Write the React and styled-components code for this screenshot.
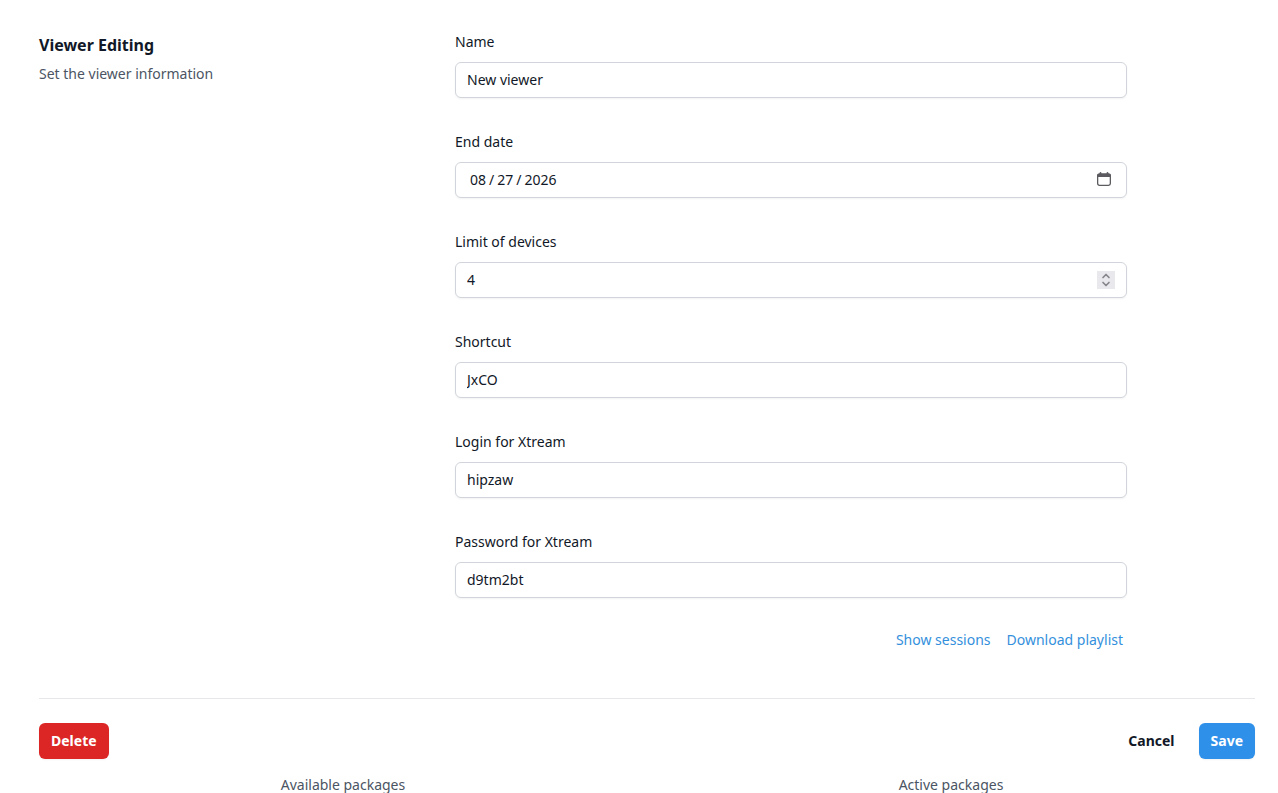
import React, { useState } from 'react';
import styled, { createGlobalStyle } from 'styled-components';

const GlobalStyle = createGlobalStyle`
  *, *::before, *::after {
    box-sizing: border-box;
  }

  body {
    margin: 0;
    background: #ffffff;
    color: #111827;
    font-family: 'Noto Sans', sans-serif;
    font-size: 14px;
    line-height: 24px;
  }
`;

const fields = [
  { id: 'name', label: 'Name', type: 'text' },
  { id: 'endDate', label: 'End date', type: 'date' },
  { id: 'devices', label: 'Limit of devices', type: 'number' },
  { id: 'shortcut', label: 'Shortcut', type: 'text' },
  { id: 'login', label: 'Login for Xtream', type: 'text' },
  { id: 'password', label: 'Password for Xtream', type: 'text' },
];

const CalendarIcon = () => (
  <svg width="14" height="14" viewBox="0 0 14 14" fill="none" aria-hidden="true">
    <rect x="0.65" y="2.15" width="12.7" height="11.2" rx="1.8" stroke="#5b5b60" strokeWidth="1.3" />
    <path d="M2 1.5h10a2 2 0 0 1 2 2V5H0V3.5a2 2 0 0 1 2-2z" fill="#5b5b60" />
    <path d="M3.5 0.9v1.5M10.5 0.9v1.5" stroke="#5b5b60" strokeWidth="1.8" strokeLinecap="round" />
  </svg>
);

const ChevronIcon = ({ d }) => (
  <svg width="18" height="9" viewBox="0 0 18 9" fill="none" aria-hidden="true">
    <path d={d} stroke="#85858c" strokeWidth="1.7" strokeLinecap="round" strokeLinejoin="round" />
  </svg>
);

const App = () => {
  const [viewer, setViewer] = useState({
    name: 'New viewer',
    endDate: '2026-08-27',
    devices: '4',
    shortcut: 'JxCO',
    login: 'hipzaw',
    password: 'd9tm2bt',
  });

  const handleChange = (e) => {
    setViewer({ ...viewer, [e.target.name]: e.target.value });
  };

  const changeDevices = (step) => {
    setViewer({ ...viewer, devices: String(Number(viewer.devices) + step) });
  };

  return (
    <>
      <GlobalStyle />
      <Page>
        <form onSubmit={(e) => e.preventDefault()}>
          <Section>
            <div>
              <Title>Viewer Editing</Title>
              <Description>Set the viewer information</Description>
            </div>
            <Fields>
              {fields.map(({ id, label, type }) => (
                <Field key={id}>
                  <Label htmlFor={id}>{label}</Label>
                  <Control>
                    <Input id={id} name={id} type={type} value={viewer[id]} onChange={handleChange} />
                    {type === 'date' && (
                      <PickerButton
                        type="button"
                        aria-label="Choose date"
                        onClick={() => document.getElementById(id).showPicker()}
                      >
                        <CalendarIcon />
                      </PickerButton>
                    )}
                    {type === 'number' && (
                      <Spinner>
                        <SpinButton type="button" aria-label="More devices" onClick={() => changeDevices(1)}>
                          <ChevronIcon d="M6 6.5 9 3.5l3 3" />
                        </SpinButton>
                        <SpinButton type="button" aria-label="Fewer devices" onClick={() => changeDevices(-1)}>
                          <ChevronIcon d="M6 2.5l3 3 3-3" />
                        </SpinButton>
                      </Spinner>
                    )}
                  </Control>
                </Field>
              ))}
              <Links>
                <Link href="#sessions">Show sessions</Link>
                <Link href="#playlist">Download playlist</Link>
              </Links>
            </Fields>
          </Section>

          <Actions>
            <Button type="button" $color="#dc2626">Delete</Button>
            <ActionGroup>
              <CancelButton type="button">Cancel</CancelButton>
              <Button type="submit" $color="#2f90ea">Save</Button>
            </ActionGroup>
          </Actions>
        </form>

        <Packages>
          <span>Available packages</span>
          <span>Active packages</span>
        </Packages>
      </Page>
    </>
  );
};

const Page = styled.main`
  padding: 30px 23px 0 39px;
`;

const Section = styled.section`
  display: grid;
  grid-template-columns: repeat(3, minmax(0, 1fr));
  column-gap: 32px;
  padding-bottom: 48px;
  border-bottom: 1px solid #e5e7eb;
`;

const Title = styled.h2`
  margin: 3px 0 0;
  font-size: 16px;
  font-weight: 700;
  line-height: 24px;
`;

const Description = styled.p`
  margin: 5px 0 0;
  color: #4b5563;
`;

const Fields = styled.div`
  grid-column: span 2;
  display: flex;
  flex-direction: column;
  gap: 32px;
  max-width: 672px;
`;

const Field = styled.div`
  display: flex;
  flex-direction: column;
  gap: 8px;
`;

const Label = styled.label`
  font-weight: 400;
`;

const Control = styled.div`
  position: relative;
`;

const Input = styled.input`
  display: block;
  width: 100%;
  height: 36px;
  padding: 0 11px 2px;
  border: 1px solid #d1d5db;
  border-radius: 6px;
  background: #ffffff;
  box-shadow: 0 1px 2px rgba(0, 0, 0, 0.05);
  color: #111827;
  font: inherit;
  appearance: textfield;

  &[type='date'] {
    padding: 0 13px;
  }

  &:focus {
    outline: 2px solid #2f90ea;
  }

  &::-webkit-datetime-edit-text {
    padding: 0 2px;
  }

  &::-webkit-calendar-picker-indicator {
    display: none;
  }

  &::-webkit-inner-spin-button {
    display: none;
  }
`;

const PickerButton = styled.button`
  position: absolute;
  top: 8px;
  right: 14px;
  display: flex;
  align-items: center;
  justify-content: center;
  width: 18px;
  height: 18px;
  padding: 0;
  border: 0;
  background: transparent;
  cursor: pointer;
`;

const Spinner = styled.div`
  position: absolute;
  top: 9px;
  right: 12px;
  background: #e9e9ed;
`;

const SpinButton = styled.button`
  display: block;
  height: 9px;
  padding: 0;
  border: 0;
  background: transparent;
  line-height: 0;
  cursor: pointer;
`;

const Links = styled.div`
  display: flex;
  justify-content: flex-end;
  gap: 16px;
  padding-right: 4px;
  line-height: 20px;
`;

const Link = styled.a`
  color: #3490dc;
  text-decoration: none;
`;

const Actions = styled.div`
  display: flex;
  align-items: center;
  justify-content: space-between;
  padding-top: 24px;
`;

const ActionGroup = styled.div`
  display: flex;
  align-items: center;
  gap: 24px;
`;

const CancelButton = styled.button`
  padding: 0;
  border: 0;
  background: transparent;
  color: #111827;
  font: inherit;
  font-weight: 700;
  cursor: pointer;
`;

const Button = styled(CancelButton)`
  height: 36px;
  padding: 0 12px;
  border-radius: 6px;
  background: ${(props) => props.$color};
  color: #ffffff;
  box-shadow: 0 1px 2px rgba(0, 0, 0, 0.05);
`;

const Packages = styled.div`
  display: grid;
  grid-template-columns: 1fr 1fr;
  padding-top: 18px;
  color: #4b5563;
  line-height: 16px;
  text-align: center;
`;

export default App;
